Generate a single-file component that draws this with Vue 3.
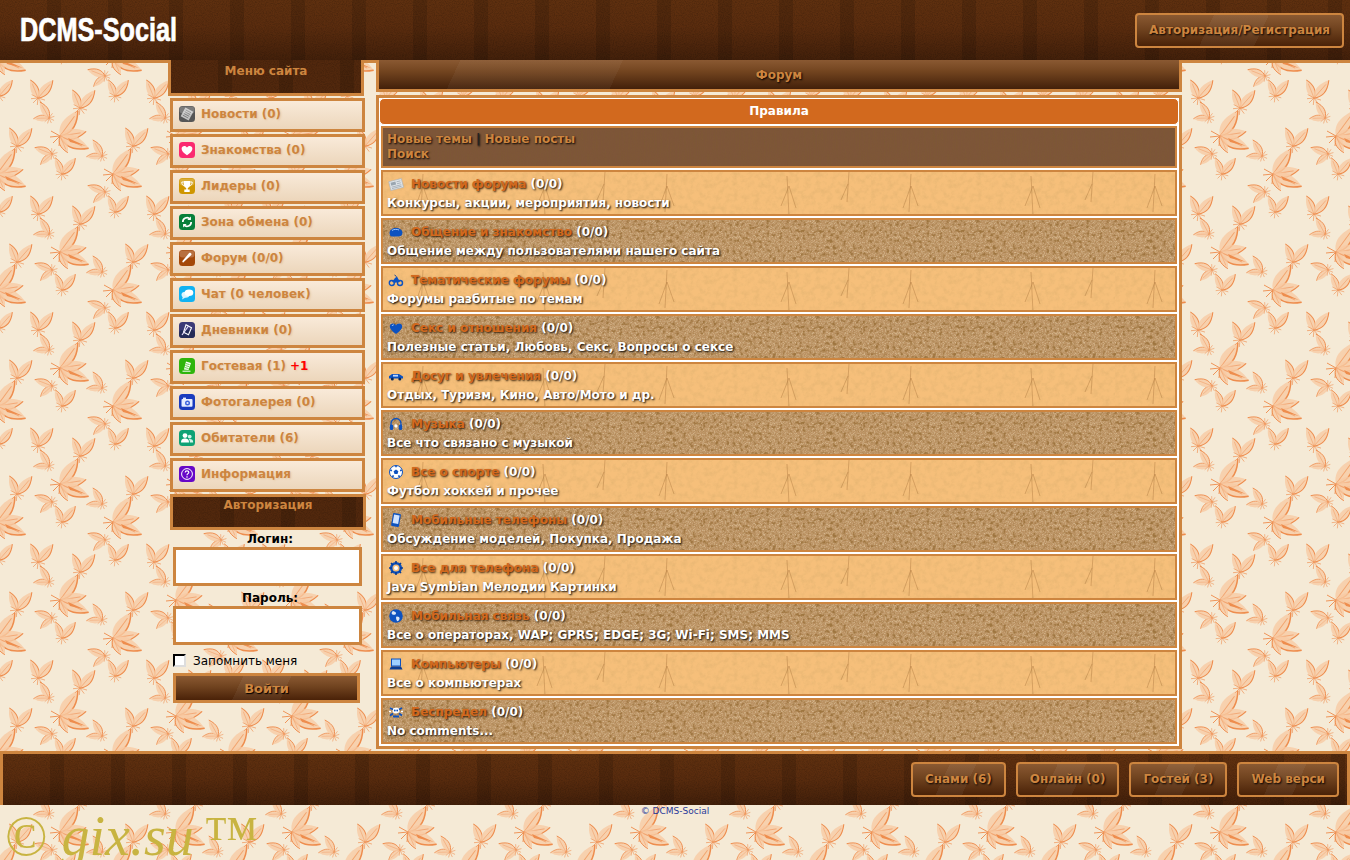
<template>
  <div class="page">
    <!-- шапка -->
    <header class="top">
      <a class="logo">DCMS-Social</a>
      <a class="btn">Авторизация/Регистрация</a>
    </header>

    <div class="body">
      <!-- левая колонка -->
      <aside class="side">
        <div class="side-head">Меню сайта</div>
        <nav class="menu">
          <a v-for="item in menu" :key="item.name" class="menu-item">
            <svg class="ico" viewBox="0 0 16 16" v-html="item.icon"></svg>
            <span>{{ item.name }}</span>
            <b v-if="item.extra" class="plus">{{ item.extra }}</b>
          </a>
        </nav>
        <div class="side-head auth-head">Авторизация</div>
        <form class="auth" @submit.prevent>
          <label class="lbl">Логин:</label>
          <input class="inp" type="text" />
          <label class="lbl lbl-pass">Пароль:</label>
          <input class="inp" type="password" />
          <label class="remember"><input type="checkbox" /><span>Запомнить меня</span></label>
          <button class="enter">Войти</button>
        </form>
      </aside>

      <!-- форум -->
      <main class="main">
        <div class="main-title">Форум</div>
        <div class="box">
          <div class="rules">Правила</div>
          <div class="links">
            <a>Новые темы</a> <i>|</i> <a>Новые посты</a><br />
            <a>Поиск</a>
          </div>
          <div v-for="(row, i) in forums" :key="row.title" class="row" :class="i % 2 ? 'row-dark' : 'row-light'">
            <div class="row-top">
              <svg class="fico" viewBox="0 0 16 16" v-html="row.icon"></svg>
              <a class="row-name">{{ row.title }}</a> (0/0)
            </div>
            <div class="row-desc">{{ row.desc }}</div>
          </div>
        </div>
      </main>
    </div>

    <footer class="foot">
      <a v-for="b in footBtns" :key="b" class="btn">{{ b }}</a>
    </footer>
    <div class="copy">© DCMS-Social</div>
    <div class="mark">© <em>gix.su</em> <span class="tm">™</span></div>
  </div>
</template>

<script setup>
// блик на иконках меню
const gloss = `<rect x=".5" y=".5" width="15" height="7" rx="3" fill="#fff" opacity=".22"/>`
const base = (c) => `<rect width="16" height="16" rx="3.5" fill="${c}"/>`

const menu = [
  { name: 'Новости (0)', icon: base('#565656') + `<g transform="rotate(28 8 8)"><rect x="3.5" y="3" width="9" height="10" fill="#c4c4c4"/><path d="M5 5h6M5 7h6M5 9h6M5 11h6" stroke="#777" stroke-width=".8"/></g>` + gloss },
  { name: 'Знакомства (0)', icon: base('#fb2a70') + `<path d="M8 13.2C4.5 10.8 2.6 9 2.6 6.8 2.6 5 4 4 5.3 4 6.5 4 7.5 4.6 8 5.6 8.5 4.6 9.5 4 10.7 4 12 4 13.4 5 13.4 6.800 13.4 9 11.5 10.800 8 13.2Z" fill="#fff"/>` },
  { name: 'Лидеры (0)', icon: base('#cf9600') + `<path d="M4.8 3h6.400v3.600c0 2-1.300 3.200-2.400 3.500v1.500h1.900v2.400H5.300v-2.400h1.900v-1.500C6.100 9.800 4.800 8.600 4.800 6.600Z" fill="#fff"/><path d="M4.800 4h-2c0 2.500 1 3.600 2.400 3.800M11.200 4h2c0 2.500-1 3.600-2.400 3.800" fill="none" stroke="#fff"/>` + gloss },
  { name: 'Зона обмена (0)', icon: base('#07803a') + `<path d="M3.800 8a4.200 4.200 0 0 1 7.200-3M12.200 8a4.200 4.200 0 0 1-7.200 3" fill="none" stroke="#fff" stroke-width="1.700"/><path d="M11.900 2.400v3.600H8.300ZM4.100 13.600V10h3.600Z" fill="#fff"/>` },
  { name: 'Форум (0/0)', icon: base('#a4480a') + `<path d="M4 12.800l-.8-1.500 6.900-8.200c.5-.5 1.300-.4 1.900.1.600.5.700 1.300.3 1.800Z" fill="#fff"/>` + gloss },
  { name: 'Чат (0 человек)', icon: base('#12b2f2') + `<ellipse cx="6.500" cy="8.800" rx="4" ry="3" fill="#dff4fd"/><ellipse cx="10" cy="6.800" rx="4.300" ry="3.200" fill="#fff"/><path d="M4 10.500l-1 3 3.500-2Z" fill="#dff4fd"/>` },
  { name: 'Дневники (0)', icon: `<rect width="16" height="16" rx="3.500" fill="#3d3a78"/><rect y="8" width="16" height="8" rx="3.500" fill="#252c58"/><path d="M7 2.800l5.500 3-3 7-5-2.500Z" fill="none" stroke="#fff" stroke-width="1.100"/><path d="M3 13l6.500-9" stroke="#e8e0ff" stroke-width="1.200"/>` },
  { name: 'Гостевая (1)', extra: '+1', icon: base('#2fb50c') + `<path d="M5 11.500l2-8 5 1.600-2.500 7Z" fill="#fff"/><path d="M6.800 5.500l3.800 1.100M6.300 7.500l3.800 1.100M5.800 9.500l3.800 1.100" stroke="#2fb50c" stroke-width=".7"/><path d="M3.500 13.200h8" stroke="#fff"/>` },
  { name: 'Фотогалерея (0)', icon: base('#1a3bbe') + `<rect x="2.500" y="5" width="11" height="7.800" rx="1" fill="#e6ecff"/><rect x="4" y="3.600" width="3" height="2" fill="#e6ecff"/><circle cx="8.500" cy="9" r="2.500" fill="#3d63dd"/><circle cx="8.500" cy="9" r="1.100" fill="#e6ecff"/>` },
  { name: 'Обитатели (6)', icon: base('#0fa275') + `<circle cx="6" cy="5.600" r="2.400" fill="#fff"/><path d="M2 12.500c0-3.200 1.800-4 4-4s4 .8 4 4Z" fill="#fff"/><circle cx="10.700" cy="6.600" r="1.900" fill="#d2f3e8"/><path d="M10.800 12.500h3.400c0-2.800-1.300-3.500-3.400-3.500-.5 0-.8.100-1 .2 1 .7 1 2 1 3.300Z" fill="#d2f3e8"/>` },
  { name: 'Информация', icon: base('#6708c8') + `<circle cx="8" cy="8" r="5.400" fill="none" stroke="#fff" stroke-width="1"/><path d="M6.200 6.500c0-1.100.8-1.700 1.800-1.700s1.800.6 1.800 1.500c0 1.300-1.800 1.400-1.800 2.900" fill="none" stroke="#fff" stroke-width="1.200"/><circle cx="8" cy="11" r=".8" fill="#fff"/>` }
]

const blue = '#0d52c0'
const forums = [
  { title: 'Новости форума', desc: 'Конкурсы, акции, мероприятия, новости', icon: `<g transform="rotate(-14 8 8)"><rect x="1.500" y="4" width="13" height="9" fill="#dfe4e8" stroke="#aab2ba" stroke-width=".6"/><rect x="3" y="5.500" width="5" height="3" fill="#9aa6b0"/><path d="M9 6h4M9 8h4M3 10h10M3 11.500h10" stroke="#9aa6b0" stroke-width=".7"/></g>` },
  { title: 'Общение и знакомство', desc: 'Общение между пользователями нашего сайта', icon: `<path d="M1.500 9c0-3 2.800-5 6.500-5s6.500 2 6.500 5c0 2.500-2 3.500-4.500 3.500H4C2.500 12.500 1.500 11 1.500 9Z" fill="${blue}"/><path d="M4 6.500C5.500 5.200 9 5 11 6" stroke="#9cc6ff" fill="none"/>` },
  { title: 'Тематические форумы', desc: 'Форумы разбитые по темам', icon: `<circle cx="3.800" cy="11" r="2.500" fill="none" stroke="${blue}" stroke-width="1.400"/><circle cx="12" cy="11" r="2.500" fill="none" stroke="${blue}" stroke-width="1.400"/><path d="M4 10l3-4 2-1.500 3 5.500-5 .8Z" fill="${blue}"/><path d="M6.500 3l2 1.500" stroke="#0a3d94"/>` },
  { title: 'Секс и отношения', desc: 'Полезные статьи, Любовь, Секс, Вопросы о сексе', icon: `<path d="M8 14C4 11 1.800 9 1.800 6.500 1.800 4.500 3.300 3.500 4.800 3.500 6.200 3.500 7.400 4.200 8 5.400 8.600 4.200 9.800 3.500 11.200 3.500 12.700 3.500 14.200 4.500 14.200 6.500 14.200 9 12 11 8 14Z" fill="${blue}"/><path d="M4 6c.3-.8 1-1.200 1.800-1.200" stroke="#9cc6ff" fill="none"/>` },
  { title: 'Досуг и увлечения', desc: 'Отдых, Туризм, Кино, Авто/Мото и др.', icon: `<path d="M1 10.500V8.200l3-2.200h7l4 2.500v2Z" fill="${blue}"/><rect x="5" y="6.800" width="5" height="1.800" fill="#bcd8ff"/><circle cx="4.300" cy="11" r="1.500" fill="#05275f"/><circle cx="11.800" cy="11" r="1.500" fill="#05275f"/>` },
  { title: 'Музыка', desc: 'Все что связано с музыкой', icon: `<path d="M3 10V7.500a5 5 0 0 1 10 0V10" fill="none" stroke="${blue}" stroke-width="1.300"/><rect x="1.800" y="8.500" width="3.400" height="5.500" rx="1.500" fill="${blue}"/><rect x="10.800" y="8.500" width="3.400" height="5.500" rx="1.500" fill="${blue}"/><circle cx="8" cy="10" r="1.700" fill="#fff"/>` },
  { title: 'Все о спорте', desc: 'Футбол хоккей и прочее', icon: `<circle cx="8" cy="8" r="6.500" fill="#fff" stroke="${blue}"/><path d="M8 5.500l2.400 1.800-.9 2.800h-3l-.9-2.800Z" fill="${blue}"/><path d="M8 1.800v1.500M2.300 6l1.600.7M13.700 6l-1.600.7M4.500 13l1-1.700M11.500 13l-1-1.700" stroke="${blue}" stroke-width="1.600"/>` },
  { title: 'Мобильные телефоны', desc: 'Обсуждение моделей, Покупка, Продажа', icon: `<g transform="rotate(10 8 8)"><rect x="4" y="1.500" width="8" height="13" rx="1" fill="${blue}"/><rect x="5.200" y="3" width="5.600" height="8.500" fill="#cfe2ff"/></g>` },
  { title: 'Все для телефона', desc: 'Java Symbian Мелодии Картинки', icon: `<circle cx="8" cy="8" r="4.800" fill="none" stroke="${blue}" stroke-width="2.600"/><path d="M8 1v3M8 12v3M1 8h3M12 8h3M3 3l2 2M11 11l2 2M13 3l-2 2M5 11l-2 2" stroke="#0a3d94" stroke-width="1.600"/><circle cx="8" cy="8" r="2" fill="#fff"/>` },
  { title: 'Мобильная связь', desc: 'Все о операторах, WAP; GPRS; EDGE; 3G; Wi-Fi; SMS; MMS', icon: `<circle cx="8" cy="8" r="6.800" fill="${blue}"/><path d="M5 3c2 .5 3 1 3 2.500S5.500 7 4.500 6.500 3 4.500 5 3ZM9 8.500c1.500 0 3 .8 2.500 2.500S9.500 14 8.800 12.500 7.500 8.500 9 8.500Z" fill="#dce8f8"/>` },
  { title: 'Компьютеры', desc: 'Все о компьютерах', icon: `<rect x="3" y="2.500" width="10" height="8" fill="${blue}"/><rect x="4" y="3.500" width="8" height="6" fill="#9fd0ff"/><path d="M1.500 13.500l1.500-3h10l1.500 3Z" fill="#0a3d94"/>` },
  { title: 'Беспредел', desc: 'No comments...', icon: `<ellipse cx="8" cy="6.500" rx="3.500" ry="3" fill="#fff"/><circle cx="6.800" cy="6.500" r=".9" fill="${blue}"/><circle cx="9.200" cy="6.500" r=".9" fill="${blue}"/><path d="M2 4l3 1.500M14 4l-3 1.500M2 11.500l3-2M14 11.500l-3-2M5 12.500h6" stroke="${blue}" stroke-width="1.800"/><path d="M1 7.500h2M13 7.500h2" stroke="#fff" stroke-width="1.300"/>` }
]

const footBtns = ['Снами (6)', 'Онлайн (0)', 'Гостей (3)', 'Web верси']
</script>

<style>
html, body {
  margin: 0;
  height: 860px;
  overflow: hidden;
  background-color: #f5ead6;
  background-image: url("data:image/svg+xml,%3Csvg xmlns='http://www.w3.org/2000/svg' width='116' height='116'%3E%3Cdefs%3E%3Cfilter id='b' x='-10%25' y='-10%25' width='120%25' height='120%25'%3E%3CfeGaussianBlur stdDeviation='.4'/%3E%3C/filter%3E%3Cg id='l'%3E%3Cpath d='M0 0C6-5 8-12 2-23C-4-15-6-6 0 0Z' fill='%23f8cba4' opacity='.8'/%3E%3Cpath d='M0 0C6-5 8-12 2-23' fill='none' stroke='%23ee8d4e' stroke-width='1.100'/%3E%3Cpath d='M0 0L2-18' stroke='%23f2a46f' stroke-width='.7'/%3E%3C/g%3E%3Cg id='f' stroke='%23ef9458' stroke-width='1'%3E%3Cpath d='M0 0L-9-5M0 0L-10 1M0 0L-7 7M0 0L-1 10M0 0L6 8M0 0L10 3'/%3E%3C/g%3E%3Cg id='p'%3E%3Cuse href='%23l' transform='rotate(-28) scale(.85)'/%3E%3Cuse href='%23l' transform='rotate(35)'/%3E%3Cuse href='%23f' transform='scale(.7)'/%3E%3C/g%3E%3Cg id='a'%3E%3Cuse href='%23f'/%3E%3Cuse href='%23l' transform='rotate(30) scale(1.350)'/%3E%3Cuse href='%23l' transform='rotate(75) scale(1.150)'/%3E%3Cuse href='%23l' transform='rotate(108) scale(1.350)'/%3E%3Cuse href='%23l' transform='rotate(150) scale(.8)'/%3E%3Cpath d='M8 2L26 10L10 6Z' fill='%23ee8d4e'/%3E%3Cuse href='%23p' x='20' y='-28'/%3E%3Cuse href='%23p' transform='translate(-11 -18) rotate(-70) scale(.8)'/%3E%3Cuse href='%23p' transform='translate(-8 18) rotate(-110) scale(.8)'/%3E%3Cuse href='%23p' transform='translate(2 38) scale(.9)'/%3E%3C/g%3E%3Cg id='t'%3E%3Cuse href='%23a' x='60' y='20'/%3E%3Cuse href='%23a' x='113' y='58'/%3E%3Cuse href='%23p' x='38' y='98' transform-origin='38 98'/%3E%3C/g%3E%3C/defs%3E%3Cg filter='url(%23b)'%3E%3Cuse href='%23t'/%3E%3Cuse href='%23t' x='-116'/%3E%3Cuse href='%23t' y='-116'/%3E%3Cuse href='%23t' x='-116' y='-116'/%3E%3Cuse href='%23t' y='116'/%3E%3Cuse href='%23t' x='116'/%3E%3C/g%3E%3C/svg%3E");
}
</style>

<style scoped>
.page {
  position: relative;
  width: 1350px;
  height: 860px;
  overflow: hidden;
  font-family: "DejaVu Sans", "Liberation Sans", sans-serif;
  font-size: 12px;
}

/* дерево для шапки и подвала */
.top, .foot, .side-head {
  background-color: #4f260c;
  background-image:
    url("data:image/svg+xml,%3Csvg xmlns='http://www.w3.org/2000/svg' width='120' height='120'%3E%3Cfilter id='n'%3E%3CfeTurbulence type='fractalNoise' baseFrequency='.9' numOctaves='2'/%3E%3CfeColorMatrix values='0 0 0 0 0 0 0 0 0 0 0 0 0 0 0 1.200 0 0 0 -.45'/%3E%3C/filter%3E%3Crect width='120' height='120' filter='url(%23n)' opacity='.3'/%3E%3C/svg%3E"),
    repeating-linear-gradient(90deg, transparent 0 47px, rgba(0, 0, 0, .13) 47px 64px, transparent 64px 108px);
  background-color: #52280d;
  background-size: auto, 61px 100%;
}

.top, .foot {
  background-image:
    url("data:image/svg+xml,%3Csvg xmlns='http://www.w3.org/2000/svg' width='120' height='120'%3E%3Cfilter id='n'%3E%3CfeTurbulence type='fractalNoise' baseFrequency='.9' numOctaves='2'/%3E%3CfeColorMatrix values='0 0 0 0 0 0 0 0 0 0 0 0 0 0 0 1.200 0 0 0 -.45'/%3E%3C/filter%3E%3Crect width='120' height='120' filter='url(%23n)' opacity='.3'/%3E%3C/svg%3E"),
    linear-gradient(90deg, transparent 47px, rgba(0, 0, 0, .13) 47px 64px, transparent 64px),
    linear-gradient(#5f300f, #5a2c0e 45%, #43200a);
  background-size: auto, 61px 100%, auto;
}

.top {
  height: 60px;
  border-bottom: 3px solid #cd853f;
  display: flex;
  align-items: center;
  justify-content: space-between;
  padding: 0 6px 0 20px;
}

.logo {
  display: inline-block;
  width: 156px;
  color: #fff;
  font-family: "Liberation Sans", sans-serif;
  font-size: 33px;
  font-weight: bold;
  white-space: nowrap;
  -webkit-text-stroke: .7px #fff;
  transform: scaleX(.765);
  transform-origin: left center;
}

.btn {
  box-sizing: border-box;
  height: 35px;
  line-height: 31px;
  padding: 0 12px;
  border: 2px solid #cd853f;
  border-radius: 4px;
  color: #cd853f;
  font-weight: bold;
  text-shadow: 1px 1px 2px #000;
  background:
    linear-gradient(115deg, transparent 35%, rgba(255, 255, 255, .05) 35% 60%, transparent 60%),
    linear-gradient(#8a5932, #70431f 45%, #4a2208);
}

.body {
  position: relative;
  display: flex;
  margin-top: -3px;
  padding-left: 168px;
  height: 691px;
}

.side {
  width: 198px;
}

.side-head {
  box-sizing: border-box;
  width: 196px;
  height: 36px;
  border: 3px solid #cd853f;
  border-top: 0;
  padding-top: 4px;
  text-align: center;
  color: #cd853f;
  font-weight: bold;
  line-height: 15px;
}

.menu {
  display: flex;
  flex-direction: column;
  gap: 2px;
  margin: 2px 0 2px 2px;
}

.menu-item {
  box-sizing: border-box;
  display: flex;
  align-items: center;
  width: 195px;
  height: 34px;
  padding: 0 0 2px 6px;
  border: 3px solid #cd853f;
  background: linear-gradient(#f9ead9, #ecd6bb);
  color: #cd853f;
  font-weight: bold;
  text-shadow: 1px 1px 2px #e6c7a2;
}

.ico {
  width: 16px;
  height: 16px;
  margin-right: 6px;
  flex: none;
}

.plus {
  margin-left: 4px;
  color: #f00;
}

.auth-head {
  margin-left: 2px;
  border-top: 3px solid #cd853f;
  height: 36px;
  padding-top: 1px;
}

.auth {
  display: flex;
  flex-direction: column;
  align-items: flex-start;
  margin: 2px 0 0 5px;
  width: 194px;
}

.lbl {
  align-self: center;
  line-height: 15px;
  font-weight: bold;
  color: #000;
}

.lbl-pass {
  margin-top: 5px;
}

.inp {
  box-sizing: border-box;
  width: 189px;
  height: 39px;
  border: 3px solid #cd853f;
  background: #fff;
  outline: 0;
}

.remember {
  display: flex;
  align-items: center;
  margin-top: 8px;
  height: 15px;
  font-size: 12px;
  color: #000;
}

.remember input {
  appearance: none;
  box-sizing: border-box;
  width: 13px;
  height: 13px;
  margin: 0 7px 0 0;
  border: 2px solid #000;
  border-right-color: #ddd;
  border-bottom-color: #ddd;
  background: #fff;
}

.enter {
  box-sizing: border-box;
  width: 187px;
  height: 30px;
  margin-top: 5px;
  border: 3px solid #cd853f;
  background:
    linear-gradient(115deg, transparent 35%, rgba(255, 255, 255, .05) 35% 60%, transparent 60%),
    linear-gradient(#8a5932, #70431f 45%, #4a2208);
  color: #cd853f;
  font: bold 13px "DejaVu Sans", sans-serif;
  text-shadow: 1px 1px 1px #000;
}

.main {
  width: 806px;
  margin-left: 10px;
}

.main-title {
  box-sizing: border-box;
  height: 32px;
  border: 3px solid #cd853f;
  border-top: 0;
  background:
    linear-gradient(115deg, transparent 10%, rgba(255, 255, 255, .04) 10% 30%, transparent 30%),
    linear-gradient(#8a5932, #72441f 40%, #43200a);
  color: #cd853f;
  font-weight: bold;
  line-height: 30px;
  text-align: center;
  text-shadow: 1px 1px 2px #000;
}

.box {
  box-sizing: border-box;
  height: 654px;
  margin-top: 3px;
  padding: 0 2px;
  border: 3px solid #cd853f;
  background: #fff;
}

.rules {
  box-sizing: border-box;
  height: 27px;
  margin: 0 -2px 1px;
  border: 1px solid #fff;
  border-radius: 5px;
  background: #d2691e;
  color: #fff;
  font-weight: bold;
  line-height: 25px;
  text-align: center;
}

.links {
  box-sizing: border-box;
  height: 42px;
  margin-bottom: 2px;
  padding: 4px 0 0 4px;
  border: 2px solid #cd853f;
  line-height: 15px;
  color: #cd853f;
  font-weight: bold;
  text-shadow: 1px 1px 2px #000;
  background-color: #7d5538;
  background-image: url("data:image/svg+xml,%3Csvg xmlns='http://www.w3.org/2000/svg' width='120' height='60'%3E%3Cfilter id='n'%3E%3CfeTurbulence type='fractalNoise' baseFrequency='.9 .04' numOctaves='2'/%3E%3CfeColorMatrix values='0 0 0 0 .2 0 0 0 0 .1 0 0 0 0 .03 1.500 0 0 0 -.55'/%3E%3C/filter%3E%3Crect width='120' height='60' filter='url(%23n)' opacity='.6'/%3E%3C/svg%3E");
}

.links i {
  font-style: normal;
  color: #222;
}

.row {
  box-sizing: border-box;
  height: 46px;
  margin-bottom: 2px;
  padding: 3px 0 0 4px;
  border: 2px solid #cd853f;
  color: #fff;
  font-weight: bold;
  line-height: 19px;
  text-shadow: 1px 1px 2px #000;
}

.row:last-child {
  margin-bottom: 0;
}

.row-light {
  background-color: #f6bf7a;
  background-image: url("data:image/svg+xml,%3Csvg xmlns='http://www.w3.org/2000/svg' width='244' height='46'%3E%3Cfilter id='n'%3E%3CfeTurbulence type='fractalNoise' baseFrequency='.18' numOctaves='4'/%3E%3CfeColorMatrix values='0 0 0 0 .7 0 0 0 0 .42 0 0 0 0 .15 2 0 0 0 -.8'/%3E%3C/filter%3E%3Crect width='244' height='46' filter='url(%23n)' opacity='.5'/%3E%3Cg stroke='%23a8733a' stroke-width='.7' fill='none' opacity='.6'%3E%3Cpath d='M40 2L38 40M40 14L32 36M40 14L47 34M160 4L162 44M162 14L154 34M162 14L169 36M222 0L220 30M221 12L214 28'/%3E%3C/g%3E%3C/svg%3E");
}

.row-dark {
  background-color: #bb9263;
  background-image: url("data:image/svg+xml,%3Csvg xmlns='http://www.w3.org/2000/svg' width='160' height='46'%3E%3Cfilter id='n'%3E%3CfeTurbulence type='fractalNoise' baseFrequency='.3' numOctaves='3'/%3E%3CfeColorMatrix values='0 0 0 0 .32 0 0 0 0 .16 0 0 0 0 .04 4 0 0 0 -2'/%3E%3C/filter%3E%3Cfilter id='m'%3E%3CfeTurbulence type='fractalNoise' baseFrequency='1.200' numOctaves='1'/%3E%3CfeColorMatrix values='0 0 0 0 1 0 0 0 0 .9 0 0 0 0 .65 3 0 0 0 -1.300'/%3E%3C/filter%3E%3Crect width='160' height='46' filter='url(%23m)' opacity='.4'/%3E%3Crect width='160' height='46' filter='url(%23n)' opacity='.85'/%3E%3C/svg%3E");
}

.fico {
  width: 16px;
  height: 16px;
  margin: 0 7px 0 1px;
  vertical-align: -4px;
}

.row-name {
  color: #d2691e;
  text-shadow: 1px 1px 2px #2b1600;
}

.foot {
  position: relative;
  box-sizing: border-box;
  height: 54px;
  border: 3px solid #cd853f;
  border-bottom: 0;
  display: flex;
  justify-content: flex-end;
  gap: 10px;
  padding: 8px 8px 0 0;
}

.copy {
  padding-top: 1px;
  text-align: center;
  font-size: 9px;
  line-height: 11px;
  color: #2a3a9a;
}

.mark {
  position: absolute;
  left: 5px;
  top: 801px;
  font-family: "Liberation Serif", serif;
  font-size: 56px;
  line-height: 70px;
  color: #c8b441;
  white-space: nowrap;
}

.tm {
  margin-left: -4px;
}
</style>
